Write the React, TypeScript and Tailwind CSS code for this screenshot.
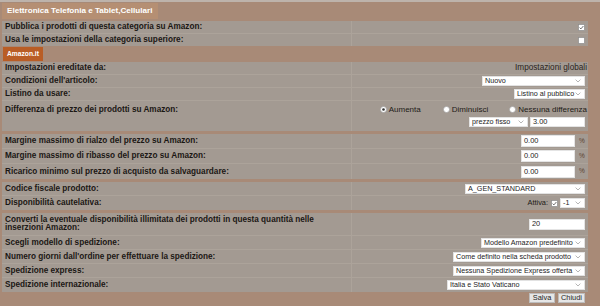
import React from "react";

const LBL = "font-bold text-[8.2px] leading-[8px] text-[#1b1714]";

function Chevron() {
  return (
    <svg width="6" height="4" viewBox="0 0 6 4" className="shrink-0">
      <path d="M0.6 0.6 L3 3 L5.4 0.6" stroke="#a3a3a3" fill="none" strokeWidth="0.8" />
    </svg>
  );
}

function Sel({ w, h = "h-[10px]", text }: { w: string; h?: string; text: string }) {
  return (
    <div className={`${w} ${h} bg-white border border-[#e2e2e2] flex items-center justify-between pl-[2px] pr-[3px]`}>
      <span className="text-[7.2px] leading-none text-[#1d1d1d] whitespace-nowrap">{text}</span>
      <Chevron />
    </div>
  );
}

function Inp({ w, h, text }: { w: string; h: string; text: string }) {
  return (
    <div className={`${w} ${h} bg-white border border-[#e4e4e4] flex items-center pl-[2px]`}>
      <span className="text-[7.4px] leading-none text-[#1d1d1d]">{text}</span>
    </div>
  );
}

function Check({ checked }: { checked: boolean }) {
  return (
    <svg width="7" height="7" viewBox="0 0 7 7" className="shrink-0">
      <rect x="0.5" y="0.5" width="6" height="6" fill="#ffffff" stroke="#8c8c8c" strokeWidth="0.7" />
      {checked && <path d="M1.6 3.6 L2.9 4.9 L5.4 2" stroke="#4a4a4a" fill="none" strokeWidth="0.8" />}
    </svg>
  );
}

function Radio({ checked }: { checked: boolean }) {
  return (
    <svg width="7" height="7" viewBox="0 0 7 7" className="shrink-0">
      <circle cx="3.5" cy="3.5" r="3" fill="#ffffff" stroke="#9a9a9a" strokeWidth="0.6" />
      {checked && <circle cx="3.5" cy="3.5" r="1.3" fill="#333333" />}
    </svg>
  );
}

function Row({
  label,
  h,
  children,
  last,
  labelTop,
}: {
  label: React.ReactNode;
  h: string;
  children?: React.ReactNode;
  last?: boolean;
  labelTop?: boolean;
}) {
  return (
    <div className={`flex ${h} ${last ? "" : "border-b border-[#aca39a]"}`}>
      <div
        className={`w-[350px] shrink-0 border-r border-[#aca39a] pl-[3px] pr-[2px] flex ${
          labelTop ? "items-start pt-[5px]" : "items-center"
        } ${LBL}`}
      >
        {label}
      </div>
      <div className="flex-1 flex items-center justify-end pr-[3px]">{children}</div>
    </div>
  );
}

function Pct({ text }: { text: string }) {
  return (
    <div className="flex items-center gap-[4px]">
      <Inp w="w-[54px]" h="h-[12px]" text={text} />
      <span className="text-[6.5px] leading-none text-[#5a4030] w-[6px]">%</span>
    </div>
  );
}

export default function App() {
  return (
    <div className="w-[600px] h-[306px] bg-[#a88a77] font-['Liberation_Sans',Arial,sans-serif] overflow-hidden">
      <div className="h-[2px] bg-[#bdb3ab]" />
      <div className="pl-[2px] pr-[12px]">
        <div className="mt-[1px] w-[156px] h-[16px] bg-[#b58f73] flex items-center pl-[5px]">
          <span className="font-bold text-[8.1px] leading-none text-white whitespace-nowrap">
            Elettronica Telefonia e Tablet,Cellulari
          </span>
        </div>

        <div className="mt-[2px] bg-[#a39a92]">
          <Row label="Pubblica i prodotti di questa categoria su Amazon:" h="h-[13px]">
            <Check checked />
          </Row>
          <Row label="Usa le impostazioni della categoria superiore:" h="h-[12px]" last>
            <Check checked={false} />
          </Row>
        </div>

        <div className="h-[16px] py-[1px] pl-[1px]">
          <div className="w-[40px] h-[14px] bg-[#b95d25] flex items-center pl-[4px]">
            <span className="font-bold text-[6.7px] leading-none text-white">Amazon.it</span>
          </div>
        </div>

        <div className="bg-[#a39a92]">
          <Row label="Impostazioni ereditate da:" h="h-[13px]">
            <span className="text-[8.2px] leading-none text-[#2a2420] mr-[-2px]">Impostazioni globali</span>
          </Row>
          <Row label="Condizioni dell'articolo:" h="h-[13px]">
            <Sel w="w-[103px]" text="Nuovo" />
          </Row>
          <Row label="Listino da usare:" h="h-[13px]">
            <Sel w="w-[71px]" text="Listino al pubblico" />
          </Row>
          <Row label="Differenza di prezzo dei prodotti su Amazon:" h="h-[30px]" labelTop last>
            <div className="flex flex-col items-end gap-[3px]">
              <div className="flex items-center h-[9px] text-[8px] leading-none text-[#1e1a17] mr-[-2px]">
                <Radio checked />
                <span className="ml-[2px]">Aumenta</span>
                <span className="ml-[22px]" />
                <Radio checked={false} />
                <span className="ml-[2px]">Diminuisci</span>
                <span className="ml-[21px]" />
                <Radio checked={false} />
                <span className="ml-[2px]">Nessuna differenza</span>
              </div>
              <div className="flex items-center gap-[2px]">
                <Sel w="w-[59px]" text="prezzo fisso" />
                <Inp w="w-[55px]" h="h-[10px]" text="3.00" />
              </div>
            </div>
          </Row>
        </div>

        <div className="mt-[3px] bg-[#a39a92]">
          <Row label="Margine massimo di rialzo del prezzo su Amazon:" h="h-[15px]">
            <Pct text="0.00" />
          </Row>
          <Row label="Margine massimo di ribasso del prezzo su Amazon:" h="h-[15px]">
            <Pct text="0.00" />
          </Row>
          <Row label="Ricarico minimo sul prezzo di acquisto da salvaguardare:" h="h-[15px]" last>
            <Pct text="0.00" />
          </Row>
        </div>

        <div className="mt-[3px] bg-[#a39a92]">
          <Row label="Codice fiscale prodotto:" h="h-[14px]">
            <Sel w="w-[120px]" text="A_GEN_STANDARD" />
          </Row>
          <Row label="Disponibilità cautelativa:" h="h-[14px]" last>
            <div className="flex items-center">
              <span className="text-[7.4px] leading-none text-[#1e1a17]">Attiva:</span>
              <span className="ml-[3px]" />
              <Check checked />
              <span className="ml-[2px]" />
              <Sel w="w-[25px]" text="-1" />
            </div>
          </Row>
        </div>

        <div className="mt-[3px] bg-[#a39a92]">
          <Row
            label="Converti la eventuale disponibilità illimitata dei prodotti in questa quantità nelle inserzioni Amazon:"
            h="h-[23px]"
          >
            <Inp w="w-[56px]" h="h-[11px]" text="20" />
          </Row>
          <Row label="Scegli modello di spedizione:" h="h-[14px]">
            <Sel w="w-[104px]" text="Modello Amazon predefinito" />
          </Row>
          <Row label="Numero giorni dall'ordine per effettuare la spedizione:" h="h-[14px]">
            <Sel w="w-[132px]" text="Come definito nella scheda prodotto" />
          </Row>
          <Row label="Spedizione express:" h="h-[14px]">
            <Sel w="w-[132px]" text="Nessuna Spedizione Express offerta" />
          </Row>
          <Row label="Spedizione internazionale:" h="h-[14px]" last>
            <Sel w="w-[138px]" text="Italia e Stato Vaticano" />
          </Row>
        </div>

        <div className="flex justify-end gap-[3px] pr-[3px] pt-[1px]">
          <div className="w-[26px] h-[10px] bg-[#e6e6e6] border border-[#bdbdbd] flex items-center justify-center">
            <span className="text-[7.4px] leading-none text-[#1d1d1d]">Salva</span>
          </div>
          <div className="w-[27px] h-[10px] bg-[#e6e6e6] border border-[#bdbdbd] flex items-center justify-center">
            <span className="text-[7.4px] leading-none text-[#1d1d1d]">Chiudi</span>
          </div>
        </div>
      </div>
    </div>
  );
}
